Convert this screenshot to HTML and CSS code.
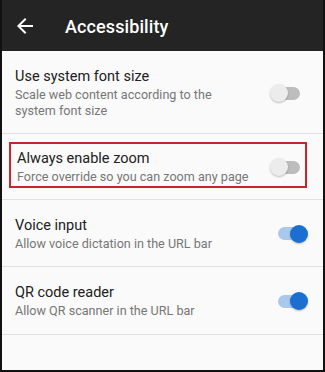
FILE: index.html
```html
<!DOCTYPE html>
<html lang="en">
<head>
    <meta charset="UTF-8">
    <meta name="viewport" content="width=device-width, initial-scale=1.0">
    <title>Accessibility</title>
    <link rel="stylesheet" href="styles.css">
</head>
<body>
    <div class="screen">
        <header class="toolbar">
            <svg class="back" width="24" height="24" viewBox="0 0 24 24">
                <path d="M20 11H7.83l5.59-5.59L12 4l-8 8 8 8 1.41-1.41L7.83 13H20v-2z" fill="#fff"/>
            </svg>
            <h1>Accessibility</h1>
        </header>

        <div class="row">
            <div class="row-text">
                <div class="title">Use system font size</div>
                <div class="summary">Scale web content according to the<br>system font size</div>
            </div>
            <div class="switch"><span class="knob"></span></div>
        </div>

        <!-- highlighted setting -->
        <div class="row row-marked">
            <div class="highlight">
                <div class="row-text">
                    <div class="title">Always enable zoom</div>
                    <div class="summary">Force override so you can zoom any page</div>
                </div>
                <div class="switch"><span class="knob"></span></div>
            </div>
        </div>

        <div class="row row-on">
            <div class="row-text">
                <div class="title">Voice input</div>
                <div class="summary">Allow voice dictation in the URL bar</div>
            </div>
            <div class="switch on"><span class="knob"></span></div>
        </div>

        <div class="row row-on">
            <div class="row-text">
                <div class="title">QR code reader</div>
                <div class="summary">Allow QR scanner in the URL bar</div>
            </div>
            <div class="switch on"><span class="knob"></span></div>
        </div>
    </div>
</body>
</html>
```

FILE: styles.css
```css
body {
    margin: 0;
    font-family: Roboto, "Noto Sans", sans-serif;
    background: #fff;
}

.screen {
    width: 325px;
    height: 372px;
    box-sizing: border-box;
    border: 2px solid #111;
    border-top: none;
    background: #fafafa;
    overflow: hidden;
}

/* Toolbar */
.toolbar {
    height: 51px;
    background: #242424;
    display: flex;
    align-items: center;
    padding-left: 11px;
    padding-top: 1px;
    box-sizing: border-box;
}

.toolbar .back {
    display: block;
    margin-right: 28px;
}

.toolbar h1 {
    margin: 0;
    color: #fff;
    font-size: 18px;
    font-weight: 500;
    letter-spacing: 0.1px;
}

/* Setting rows */
.row {
    display: flex;
    align-items: center;
    padding: 17px 23px 15px 13px;
    border-bottom: 1px solid #e2e2e2;
}

.row-on {
    padding-right: 16px;
}

.row-text {
    flex: 1;
}

.title {
    font-size: 14.5px;
    line-height: 18px;
    color: #212121;
}

.summary {
    margin-top: 1px;
    font-size: 12.6px;
    line-height: 15.5px;
    color: #777;
}

.row-marked {
    padding: 8px 16px 11px 7px;
}

.highlight {
    flex: 1;
    display: flex;
    align-items: center;
    border: 2px solid #c1272d;
    padding: 6px 5px 1px 6px;
}

/* Switch */
.switch {
    width: 29px;
    height: 13px;
    border-radius: 7px;
    background: #bdbdbd;
    display: flex;
    align-items: center;
}

.knob {
    width: 18px;
    height: 18px;
    border-radius: 50%;
    background: #ececec;
    box-shadow: 0 1px 2px rgba(0, 0, 0, 0.25);
    margin-left: -1px;
}

.switch.on {
    background: #a9c8ec;
    justify-content: flex-end;
}

.switch.on .knob {
    background: #1a6fd1;
    margin-left: 0;
    margin-right: -1px;
}
```
